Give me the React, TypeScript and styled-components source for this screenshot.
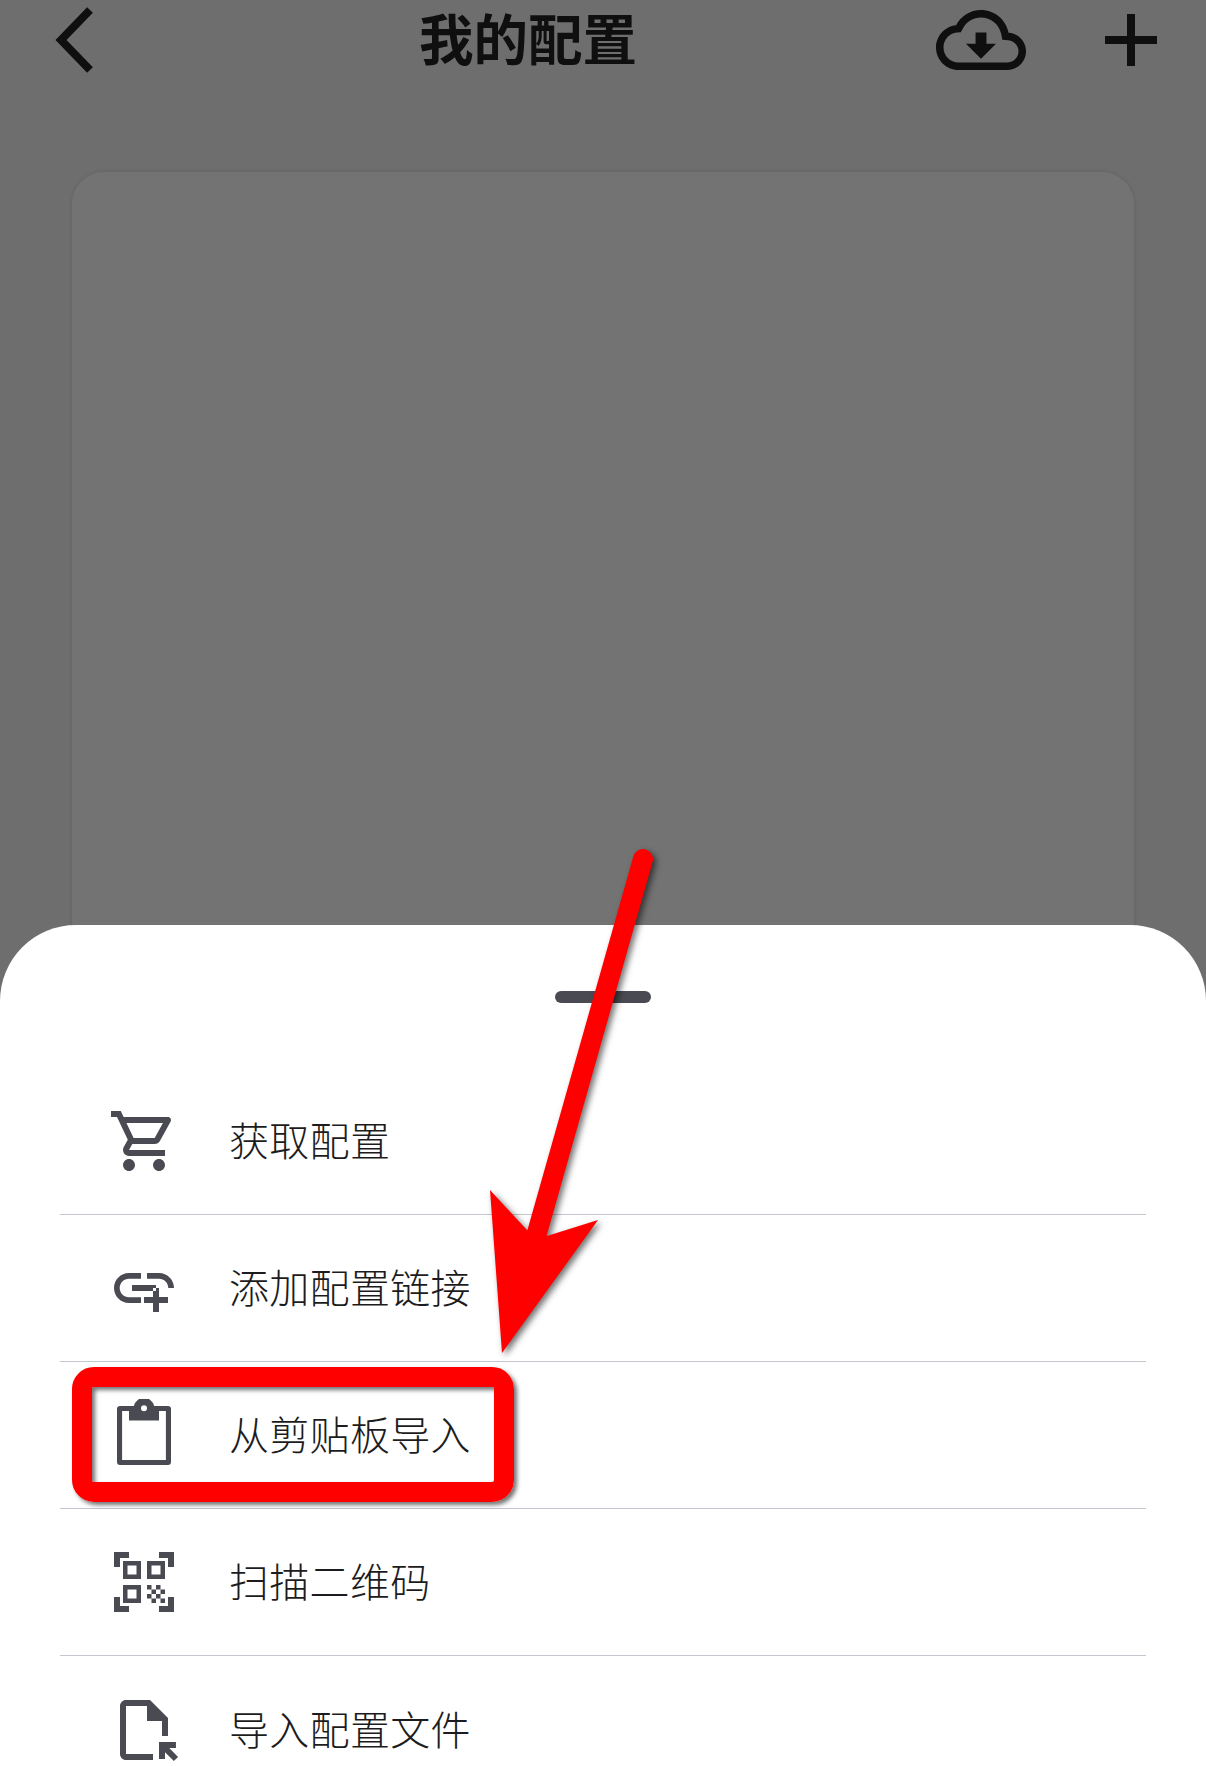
import React from 'react';
import styled, { createGlobalStyle } from 'styled-components';

type MenuItemData = {
  label: string;
  path: string;
};

const CART_PATH =
  'M15.55 13c.75 0 1.41-.41 1.75-1.03l3.58-6.49c.37-.66-.11-1.48-.87-1.48H5.21l-.94-2H1v2h2l3.6 7.59-1.35 2.44C4.52 15.37 5.48 17 7 17h12v-2H7l1.1-2h7.45zM6.16 6h12.15l-2.76 5H8.53L6.16 6zM7 18c-1.1 0-1.99.9-1.99 2S5.9 22 7 22s2-.9 2-2-.9-2-2-2zm10 0c-1.1 0-1.99.9-1.99 2s.89 2 1.99 2 2-.9 2-2-.9-2-2-2z';
const ADD_LINK_PATH =
  'M8 11h8v2H8zm12.1 1H22c0-2.76-2.24-5-5-5h-4v1.9h4c1.71 0 3.1 1.39 3.1 3.1zM3.9 12c0-1.71 1.39-3.1 3.1-3.1h4V7H7c-2.76 0-5 2.24-5 5s2.24 5 5 5h4v-1.9H7c-1.71 0-3.1-1.39-3.1-3.1zM17 12h-2v3h-3v2h3v3h2v-3h3v-2h-3z';
const CLIPBOARD_PATH =
  'M4 2.3h4.6a3.5 3.5 0 0 1 6.800 0H20a1 1 0 0 1 1 1V21a1 1 0 0 1-1 1H4a1 1 0 0 1-1-1V3.300a1 1 0 0 1 1-1zM4.700 4v16.300h14.600V4H17v3.200H7V4zM12 2.100a1 1 0 1 0 0 2 1 1 0 0 0 0-2z';
const QR_PATH =
  'M9.5 6.5v3h-3v-3h3M11 5H5v6h6V5zm-1.500 9.500v3h-3v-3h3M11 13H5v6h6v-6zm6.500-6.500v3h-3v-3h3M19 5h-6v6h6V5zm-6 8h1.500v1.500H13V13zm1.500 1.500H16V16h-1.500v-1.500zM16 13h1.500v1.500H16V13zm-3 3h1.500v1.500H13V16zm1.500 1.500H16V19h-1.500v-1.500zM16 16h1.500v1.500H16V16zm1.500-1.500H19V16h-1.500v-1.500zm0 3H19V19h-1.500v-1.500zM22 7h-2V4h-3V2h5v5zm0 15v-5h-2v3h-3v2h5zM2 22h5v-2H4v-3H2v5zM2 2v5h2V4h3V2H2z';
const FILE_OPEN_PATH =
  'M15 22H6c-1.100 0-2-.9-2-2V4c0-1.100.9-2 2-2h8l6 6v6h-2V9h-5V4H6v16h9v2zm4-.34v-2.240l2.950 2.950 1.410-1.410L20.410 18h2.240v-2H17v5.660h2z';
const CLOUD_PATH =
  'M19.35 10.04C18.67 6.59 15.64 4 12 4 9.11 4 6.6 5.64 5.35 8.04 2.34 8.36 0 10.91 0 14c0 3.31 2.69 6 6 6h13c2.76 0 5-2.24 5-5 0-2.64-2.05-4.78-4.65-4.96zM19 18H6c-2.21 0-4-1.79-4-4 0-2.05 1.53-3.76 3.56-3.97l1.07-.11.5-.95C8.08 7.14 9.94 6 12 6c2.62 0 4.88 1.86 5.39 4.43l.3 1.5 1.53.11c1.56.1 2.78 1.41 2.78 2.96 0 1.65-1.35 3-3 3zm-5.550-8h-2.900v3H8l4 4 4-4h-2.550z';

const MENU_ITEMS: MenuItemData[] = [
  { label: '获取配置', path: CART_PATH },
  { label: '添加配置链接', path: ADD_LINK_PATH },
  { label: '从剪贴板导入', path: CLIPBOARD_PATH },
  { label: '扫描二维码', path: QR_PATH },
  { label: '导入配置文件', path: FILE_OPEN_PATH },
];

const GlobalStyle = createGlobalStyle`
  html, body {
    margin: 0;
    padding: 0;
    background: #6e6e6e;
  }

  body {
    font-family: "Noto Sans CJK SC", "Noto Sans", sans-serif;
  }
`;

const Page = styled.div`
  position: relative;
  display: flex;
  flex-direction: column;
  width: 1206px;
  height: 1766px;
  overflow: hidden;
  background: #6e6e6e;
`;

const Header = styled.header`
  display: flex;
  align-items: center;
  flex-shrink: 0;
  height: 80px;
  padding: 0 49px 92px 52px;
`;

const BackIcon = styled.svg`
  width: 44px;
  height: 68px;
  fill: none;
  stroke: #0f0f0f;
  stroke-width: 8;
`;

const Title = styled.h1`
  margin: 0 0 6px 323px;
  font-size: 54.5px;
  font-weight: 700;
  line-height: 60px;
  color: #0f0f0f;
`;

const Actions = styled.div`
  display: flex;
  align-items: center;
  gap: 79px;
  margin-left: auto;
`;

const CloudIcon = styled.svg`
  width: 90px;
  height: 90px;
  fill: #0f0f0f;
`;

const PlusIcon = styled.svg`
  width: 52px;
  height: 52px;
  fill: #0f0f0f;
`;

const Card = styled.section`
  flex: 1;
  margin: 0 72px;
  border-radius: 32px;
  background: #737373;
  box-shadow: 0 0 4px rgba(0, 0, 0, 0.12);
`;

const Sheet = styled.section`
  position: absolute;
  top: 925px;
  left: 0;
  right: 0;
  bottom: 0;
  display: flex;
  flex-direction: column;
  padding: 66px 60px 0;
  border-radius: 76px 76px 0 0;
  background: #ffffff;
`;

const Handle = styled.div`
  flex-shrink: 0;
  align-self: center;
  width: 96px;
  height: 12px;
  margin-bottom: 65px;
  border-radius: 6px;
  background: #4a4a52;
`;

const MenuList = styled.ul`
  margin: 0;
  padding: 0;
  list-style: none;
`;

const MenuRow = styled.li`
  display: flex;
  align-items: center;
  gap: 49px;
  box-sizing: border-box;
  height: 147px;
  padding-left: 48px;
  border-bottom: 1px solid #c6c6d0;

  &:last-child {
    border-bottom: none;
  }
`;

const MenuIcon = styled.svg`
  flex-shrink: 0;
  width: 72px;
  height: 72px;
  fill: #4a4a52;
  fill-rule: evenodd;
`;

const MenuLabel = styled.span`
  margin-bottom: 4px;
  font-size: 40px;
  font-weight: 300;
  line-height: 56px;
  letter-spacing: 0.3px;
  color: #1c1c20;
`;

const Highlight = styled.div`
  position: absolute;
  top: 1367px;
  left: 72px;
  box-sizing: border-box;
  width: 442px;
  height: 135px;
  border: 20px solid #ff0000;
  border-radius: 22px;
  box-shadow:
    3px 3px 4px rgba(0, 0, 0, 0.55),
    inset 3px 3px 4px rgba(0, 0, 0, 0.55);
`;

const Arrow = styled.svg`
  position: absolute;
  top: 840px;
  left: 480px;
  width: 180px;
  height: 530px;
  overflow: visible;
  filter: drop-shadow(3px 3px 3px rgba(0, 0, 0, 0.55));
`;

export default function App() {
  return (
    <Page>
      <GlobalStyle />
      <Header>
        <BackIcon viewBox="0 0 44 68">
          <polyline points="38,4 9,34 38,64" />
        </BackIcon>
        <Title>我的配置</Title>
        <Actions>
          <CloudIcon viewBox="0 0 24 24">
            <path d={CLOUD_PATH} />
          </CloudIcon>
          <PlusIcon viewBox="0 0 52 52">
            <path d="M22 0h8v22h22v8H30v22h-8V30H0v-8h22z" />
          </PlusIcon>
        </Actions>
      </Header>
      <Card />
      <Sheet>
        <Handle />
        <MenuList>
          {MENU_ITEMS.map((item) => (
            <MenuRow key={item.label}>
              <MenuIcon viewBox="0 0 24 24">
                <path d={item.path} />
              </MenuIcon>
              <MenuLabel>{item.label}</MenuLabel>
            </MenuRow>
          ))}
        </MenuList>
      </Sheet>
      <Highlight />
      <Arrow viewBox="0 0 180 530">
        <line x1="163" y1="19" x2="57" y2="393" stroke="#ff0000" strokeWidth="20" strokeLinecap="round" />
        <polygon points="10,350 47,390 67,396 118,380 22,513" fill="#ff0000" />
      </Arrow>
    </Page>
  );
}
